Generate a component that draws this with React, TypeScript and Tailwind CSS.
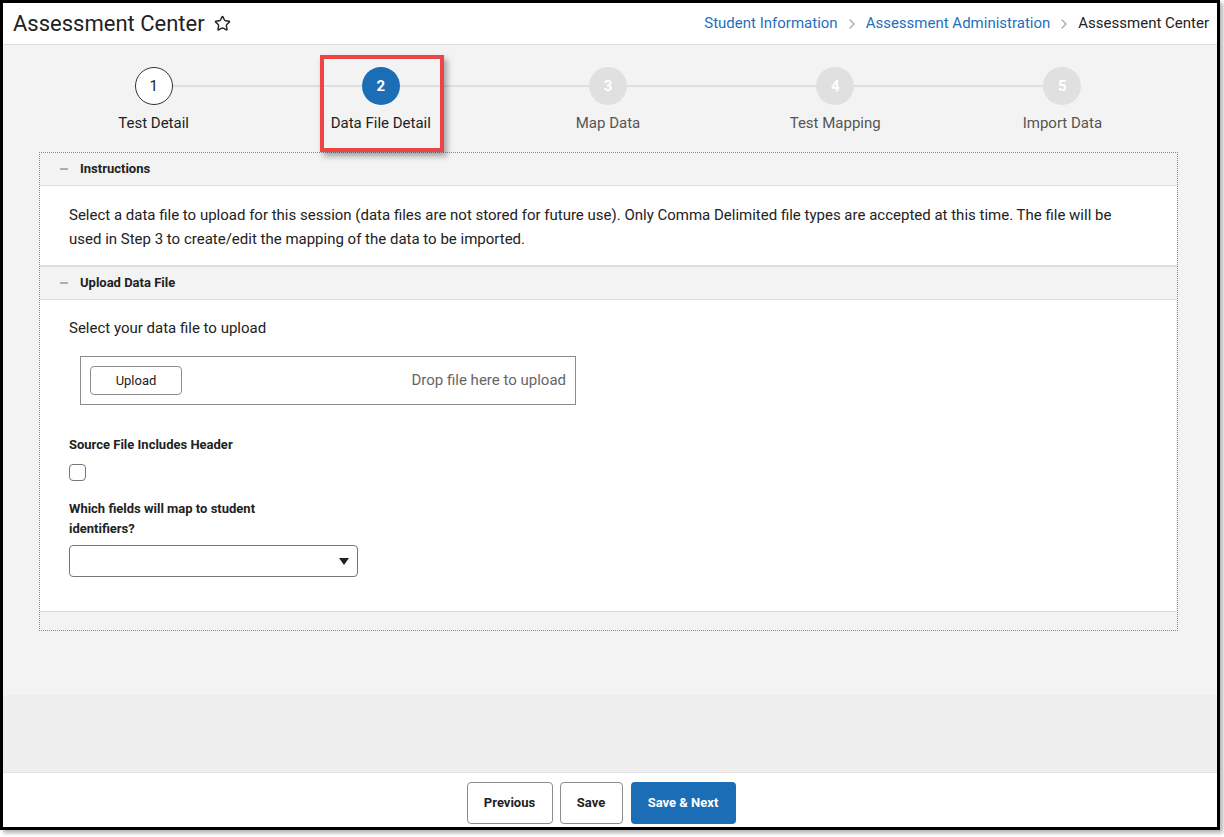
import { Star, ChevronRight, Minus } from "lucide-react";

const steps = [
  { n: 1, label: "Test Detail", state: "done" },
  { n: 2, label: "Data File Detail", state: "active" },
  { n: 3, label: "Map Data", state: "todo" },
  { n: 4, label: "Test Mapping", state: "todo" },
  { n: 5, label: "Import Data", state: "todo" },
];

function Stepper() {
  return (
    <div className="relative ml-[1px] w-[1136px] pt-[22px]">
      {/* connector line */}
      <div className="absolute left-[114px] right-[114px] top-[40px] h-[2px] bg-[#dedede]" />

      <div className="relative grid grid-cols-5">
        {steps.map((s) => (
          <div key={s.n} className="flex flex-col items-center">
            {s.state === "done" && (
              <div className="flex h-[38px] w-[38px] items-center justify-center rounded-full border border-[#333] bg-white text-[15px] text-[#222]">
                {s.n}
              </div>
            )}
            {s.state === "active" && (
              <div className="flex h-[38px] w-[38px] items-center justify-center rounded-full bg-[#1b6db5] text-[15px] font-bold text-white">
                {s.n}
              </div>
            )}
            {s.state === "todo" && (
              <div className="flex h-[38px] w-[38px] items-center justify-center rounded-full bg-[#e0e0e0] text-[15px] font-bold text-white">
                {s.n}
              </div>
            )}
            <div
              className={
                s.state === "todo"
                  ? "mt-[9px] text-[15px] leading-[18px] text-[#555]"
                  : "mt-[9px] text-[15px] leading-[18px] text-[#222]"
              }
            >
              {s.label}
            </div>
          </div>
        ))}
      </div>

      {/* highlight box around the current step */}
      <div className="pointer-events-none absolute left-[280px] top-[10px] h-[97px] w-[124px] border-[4px] border-[#ef4444] shadow-[3px_4px_6px_rgba(0,0,0,0.35)]" />
    </div>
  );
}

function SectionHeader({ title }: { title: string }) {
  return (
    <div className="flex h-[33px] items-center gap-[10px] border-b border-[#dcdcdc] bg-[#f3f3f3] pl-[18px]">
      <Minus size={12} strokeWidth={2} className="text-[#666]" />
      <span className="text-[13px] font-bold text-[#222]">{title}</span>
    </div>
  );
}

export default function App() {
  return (
    <div className="h-[837px] w-[1224px] bg-white font-['Roboto',_'Liberation_Sans',_sans-serif]">
      <div className="flex h-[830px] w-[1220px] flex-col border-[3px] border-black shadow-[3px_3px_4px_rgba(0,0,0,0.3)]">
        {/* page header */}
        <header className="flex h-[42px] shrink-0 items-center justify-between border-b border-[#dddddd] bg-white pl-[10px] pr-[8px]">
          <div className="flex items-center gap-[9px]">
            <h1 className="text-[22px] leading-none text-[#222]">Assessment Center</h1>
            <Star size={17} strokeWidth={2} className="text-[#222]" />
          </div>
          <nav className="flex items-center gap-[6px] text-[15px]">
            <span className="text-[#1f6fbd]">Student Information</span>
            <ChevronRight size={16} className="text-[#aaa]" />
            <span className="text-[#1f6fbd]">Assessment Administration</span>
            <ChevronRight size={16} className="text-[#aaa]" />
            <span className="text-[#222]">Assessment Center</span>
          </nav>
        </header>

        {/* main content */}
        <main className="h-[650px] shrink-0 bg-[#f3f3f3] pl-[36px]">
          <Stepper />

          <div className="mt-[20px] w-[1139px] border border-dotted border-[#8a8a8a] pb-[18px]">
            <SectionHeader title="Instructions" />
            <div className="border-b-2 border-[#dcdcdc] bg-white px-[29px] pb-[14px] pt-[17px]">
              <p className="w-[1070px] text-[15px] leading-[24px] text-[#222]">
                Select a data file to upload for this session (data files are not stored for future use). Only Comma
                Delimited file types are accepted at this time. The file will be used in Step 3 to create/edit the mapping
                of the data to be imported.
              </p>
            </div>

            <SectionHeader title="Upload Data File" />
            <div className="mr-[1px] border-b border-[#dcdcdc] bg-white px-[29px] pb-[34px] pt-[17px]">
              <div className="text-[15px] leading-[22px] text-[#222]">Select your data file to upload</div>

              <div className="ml-[11px] mt-[17px] flex h-[49px] w-[496px] items-center justify-between border border-[#8c8c8c] pl-[9px] pr-[9px]">
                <button className="h-[29px] w-[92px] rounded-[4px] border border-[#8c8c8c] bg-white text-[13px] text-[#222]">
                  Upload
                </button>
                <span className="text-[15px] text-[#666]">Drop file here to upload</span>
              </div>

              <div className="mt-[31px] text-[13px] font-bold leading-[18px] text-[#222]">Source File Includes Header</div>
              <div className="mt-[10px] h-[17px] w-[17px] rounded-[4px] border border-[#777] bg-white" />

              <div className="mt-[18px] w-[230px] text-[13px] font-bold leading-[20px] text-[#222]">
                Which fields will map to student identifiers?
              </div>
              <div className="mt-[6px] flex h-[32px] w-[289px] items-center justify-end rounded-[4px] border border-[#777] bg-white pr-[8px]">
                <svg width="10" height="7" viewBox="0 0 10 7">
                  <path d="M0 0 H10 L5 7 Z" fill="#222" />
                </svg>
              </div>
            </div>
          </div>
        </main>

        <div className="h-[78px] shrink-0 border-b border-[#e2e2e2] bg-[#eeeeee]" />

        {/* footer actions */}
        <footer className="flex flex-1 items-start justify-center gap-[7px] bg-white pr-[18px] pt-[9px]">
          <button className="h-[42px] w-[86px] rounded-[4px] border border-[#8c8c8c] bg-white text-[13px] font-bold text-[#222]">
            Previous
          </button>
          <button className="h-[42px] w-[63px] rounded-[4px] border border-[#8c8c8c] bg-white text-[13px] font-bold text-[#222]">
            Save
          </button>
          <button className="ml-[1px] h-[42px] w-[105px] rounded-[4px] bg-[#1b6db5] text-[13px] font-bold text-white">
            Save &amp; Next
          </button>
        </footer>
      </div>
    </div>
  );
}
